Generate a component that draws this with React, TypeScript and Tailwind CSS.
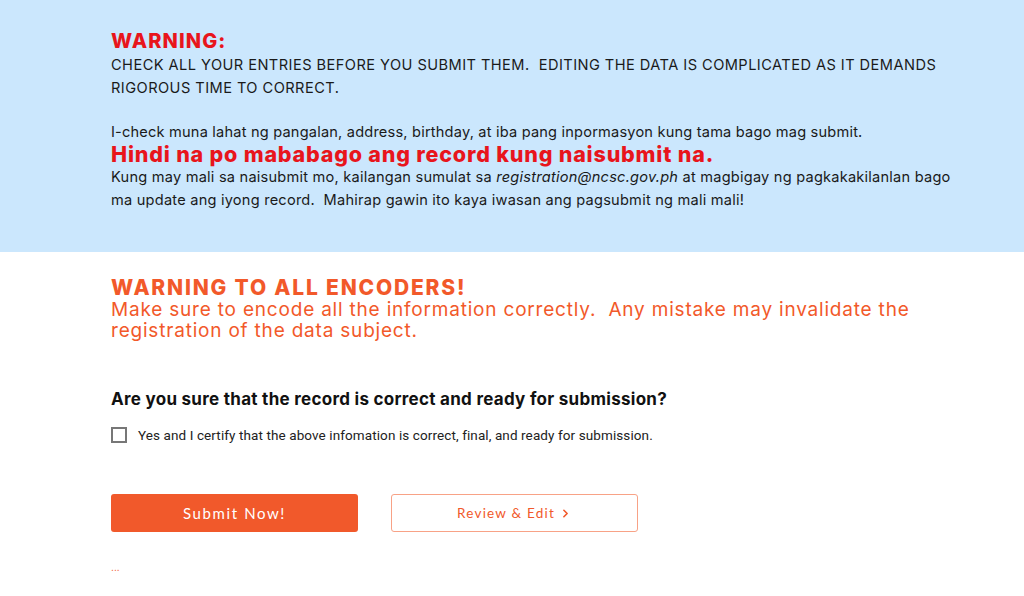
import { ChevronRight } from 'lucide-react';

const sans = { fontFamily: 'Inter, "Open Sans", sans-serif' };

export default function App() {
  return (
    <div className="min-h-[596px] w-[1024px] bg-white" style={sans}>
      <section className="h-[252px] bg-[#cbe7fd] pl-[111px] pr-[40px] pt-[29px] text-[#1a1a1a]">
        <h2 className="text-[20px] font-extrabold leading-[25px] tracking-[1.1px] text-[#e8151c]">WARNING:</h2>
        <p className="text-[14.6px] leading-[23px] tracking-[0.45px]">
          CHECK ALL YOUR ENTRIES BEFORE YOU SUBMIT THEM.&nbsp; EDITING THE DATA IS COMPLICATED AS IT DEMANDS
          <br />
          RIGOROUS TIME TO CORRECT.
        </p>
        <p className="mt-[21px] text-[14.6px] leading-[22px] tracking-[0.19px]">
          I-check muna lahat ng pangalan, address, birthday, at iba pang inpormasyon kung tama bago mag submit.
        </p>
        <h3 className="text-[21.5px] font-extrabold leading-[22px] tracking-[0.8px] text-[#e8151c]">
          Hindi na po mababago ang record kung naisubmit na.
        </h3>
        <p className="mt-[1px] text-[14.6px] leading-[23px] tracking-[0.22px]">
          Kung may mali sa naisubmit mo, kailangan sumulat sa <em>registration@ncsc.gov.ph</em> at magbigay ng pagkakakilanlan bago
          <br />
          ma update ang iyong record.&nbsp; Mahirap gawin ito kaya iwasan ang pagsubmit ng mali mali!
        </p>
      </section>

      <section className="pl-[111px] pr-[40px] pt-[24px]">
        <h2 className="text-[21px] font-extrabold leading-[23px] tracking-[1.8px] text-[#f2592a]">WARNING TO ALL ENCODERS!</h2>
        <p className="text-[19px] leading-[21px] tracking-[0.8px] text-[#f2592a]">
          Make sure to encode all the information correctly.&nbsp; Any mistake may invalidate the
          <br />
          registration of the data subject.
        </p>

        <h3 className="mt-[47px] text-[17px] font-bold leading-[22px] tracking-[0.28px] text-[#111]">
          Are you sure that the record is correct and ready for submission?
        </h3>
        <label
          className="mt-[15px] flex items-center gap-[11px] text-[13.5px] tracking-[0.1px] text-[#222]"
          style={{ fontFamily: 'Roboto, sans-serif' }}
        >
          <span className="h-[16px] w-[16px] border-2 border-[#777] bg-white" />
          Yes and I certify that the above infomation is correct, final, and ready for submission.
        </label>

        <div className="mt-[49px] flex gap-[33px]" style={{ fontFamily: 'Lato, sans-serif' }}>
          <button className="h-[38px] w-[247px] rounded-[3px] bg-[#f1592b] text-[15px] tracking-[1.6px] text-white">
            Submit Now!
          </button>
          <button className="flex h-[38px] w-[247px] items-center justify-center gap-[4px] rounded-[3px] border border-[#f8a286] bg-white text-[13.5px] tracking-[1.2px] text-[#f1592b]">
            Review &amp; Edit
            <ChevronRight size={13} strokeWidth={3} />
          </button>
        </div>

        <p className="mt-[29px] text-[10px] leading-[12px] text-[#f1592b]">...</p>
      </section>
    </div>
  );
}
